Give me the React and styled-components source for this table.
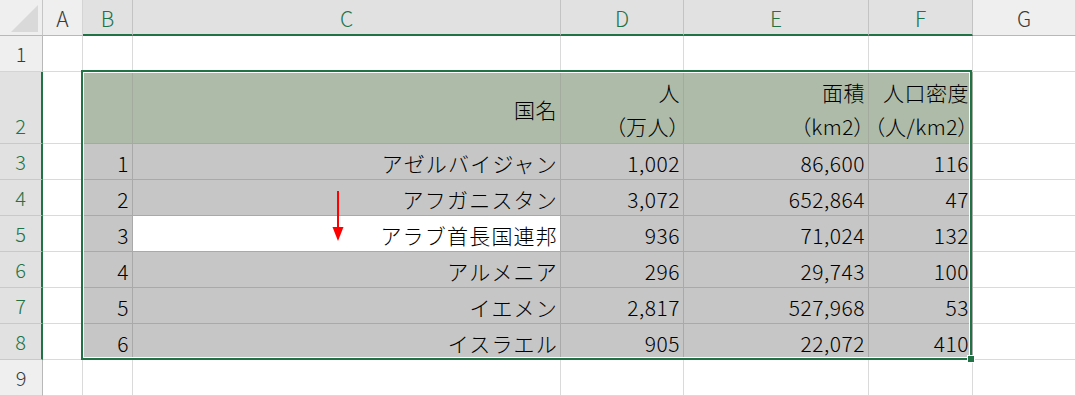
import React from "react";
import styled, { createGlobalStyle, css } from "styled-components";

const GREEN = "#217346";

const GlobalStyle = createGlobalStyle`
  html, body { margin: 0; padding: 0; background: #ffffff; }
  body {
    font-family: "Noto Sans CJK JP", "Noto Sans", sans-serif;
    width: 1076px;
    height: 396px;
    overflow: hidden;
  }
`;

const Sheet = styled.div`
  position: relative;
  display: grid;
  grid-template-columns: 43px 40px 50px 428px 123px 185px 104px 1fr;
  grid-template-rows: 36px 36px 72px repeat(7, 36px);
  width: 1076px;
  height: 396px;
  overflow: hidden;
  background: #ffffff;
`;

const Corner = styled.div`
  box-sizing: border-box;
  background: #efefef;
  border-right: 1px solid #c6c6c6;
  border-bottom: 1px solid #b8b8b8;
  display: flex;
  align-items: flex-end;
  justify-content: flex-end;
  padding: 0 3px 3px 0;
`;

const ColHeader = styled.div`
  box-sizing: border-box;
  display: flex;
  align-items: center;
  justify-content: center;
  font-size: 21px;
  font-weight: 300;
  padding-top: 1px;
  background: ${(p) => (p.$sel ? "#e1e1e1" : "#efefef")};
  color: ${(p) => (p.$sel ? GREEN : "#3b3b3b")};
  border-right: 1px solid ${(p) => (p.$sel ? "#c3c3c3" : "#d4d4d4")};
  border-bottom: ${(p) => (p.$sel ? `2px solid ${GREEN}` : "1px solid #b8b8b8")};
`;

const RowHeader = styled.div`
  box-sizing: border-box;
  display: flex;
  align-items: flex-end;
  justify-content: center;
  font-size: 20px;
  font-weight: 300;
  line-height: 34px;
  background: ${(p) => (p.$sel ? "#e1e1e1" : "#efefef")};
  color: ${(p) => (p.$sel ? GREEN : "#3b3b3b")};
  border-bottom: 1px solid ${(p) => (p.$sel ? "#c9c9c9" : "#d4d4d4")};
  border-right: ${(p) => (p.$sel ? `2px solid ${GREEN}` : "1px solid #b8b8b8")};
`;

const fills = {
  plain: css`
    background: #ffffff;
    border-color: #dadada;
  `,
  head: css`
    background: #aebba8;
    border-color: #a3ab9f;
  `,
  data: css`
    background: #c6c6c6;
    border-color: #a9a9a9;
  `,
  active: css`
    background: #ffffff;
    border-color: #a9a9a9;
  `,
};

const Cell = styled.div`
  box-sizing: border-box;
  border-right: 1px solid;
  border-bottom: 1px solid;
  ${(p) => fills[p.$kind || "plain"]}
  display: flex;
  flex-direction: column;
  justify-content: center;
  align-items: flex-end;
  padding-right: ${(p) => (p.$jp ? "2px" : "3px")};
  padding-top: 2px;
  font-size: 21px;
  font-weight: 300;
  line-height: 34px;
  letter-spacing: ${(p) => (p.$jp ? "1.2px" : "0.5px")};
  color: #000000;
  white-space: nowrap;
`;

const HeadLine = styled.span`
  display: block;
  font-feature-settings: ${(p) => (p.$palt ? '"palt"' : "normal")};
`;

const SelectionFrame = styled.div`
  position: absolute;
  left: 81px;
  top: 70px;
  width: 891px;
  height: 290px;
  box-sizing: border-box;
  border: 2px solid ${GREEN};
  box-shadow: inset 0 0 0 1px #ffffff;
  pointer-events: none;
`;

const FillHandle = styled.div`
  position: absolute;
  right: -5px;
  bottom: -5px;
  width: 6px;
  height: 6px;
  background: ${GREEN};
  border: 1px solid #ffffff;
`;

const Arrow = styled.svg`
  position: absolute;
  left: 332px;
  top: 191px;
  pointer-events: none;
`;

const columns = ["A", "B", "C", "D", "E", "F", "G"];
const selectedCols = ["B", "C", "D", "E", "F"];

const data = [
  ["1", "アゼルバイジャン", "1,002", "86,600", "116"],
  ["2", "アフガニスタン", "3,072", "652,864", "47"],
  ["3", "アラブ首長国連邦", "936", "71,024", "132"],
  ["4", "アルメニア", "296", "29,743", "100"],
  ["5", "イエメン", "2,817", "527,968", "53"],
  ["6", "イスラエル", "905", "22,072", "410"],
];

const headers = [[""], ["国名"], ["人", "（万人）"], ["面積", "（km2）"], ["人口密度", "（人/km2）"]];

function CornerMark() {
  return (
    <svg width="28" height="27" viewBox="0 0 28 27">
      <polygon points="27,0 27,27 0,27" fill="#d9d9d9" />
    </svg>
  );
}

export default function App() {
  return (
    <>
      <GlobalStyle />
      <Sheet>
        <Corner>
          <CornerMark />
        </Corner>
        {columns.map((c) => (
          <ColHeader key={c} $sel={selectedCols.includes(c)}>
            {c}
          </ColHeader>
        ))}

        {/* Row 1 */}
        <RowHeader>1</RowHeader>
        {columns.map((c) => (
          <Cell key={c} />
        ))}

        {/* Row 2 */}
        <RowHeader $sel>2</RowHeader>
        <Cell />
        {headers.map((lines, i) => (
          <Cell key={i} $kind="head">
            {lines.map((l, j) => (
              <HeadLine key={j} $palt={l.startsWith("（")}>
                {l}
              </HeadLine>
            ))}
          </Cell>
        ))}
        <Cell />

        {data.map((row, r) => (
          <React.Fragment key={r}>
            <RowHeader $sel>{r + 3}</RowHeader>
            <Cell />
            {row.map((v, i) => (
              <Cell key={i} $jp={i === 1} $kind={r === 2 && i === 1 ? "active" : "data"}>
                {v}
              </Cell>
            ))}
            <Cell />
          </React.Fragment>
        ))}

        {/* Row 9 */}
        <RowHeader>9</RowHeader>
        {columns.map((c) => (
          <Cell key={c} />
        ))}

        <SelectionFrame>
          <FillHandle />
        </SelectionFrame>
        <Arrow width="12" height="50" viewBox="0 0 12 50">
          <rect x="5" y="0" width="2" height="38" fill="#ff0000" />
          <polygon points="0.5,36 11.5,36 6,50" fill="#ff0000" />
        </Arrow>
      </Sheet>
    </>
  );
}
